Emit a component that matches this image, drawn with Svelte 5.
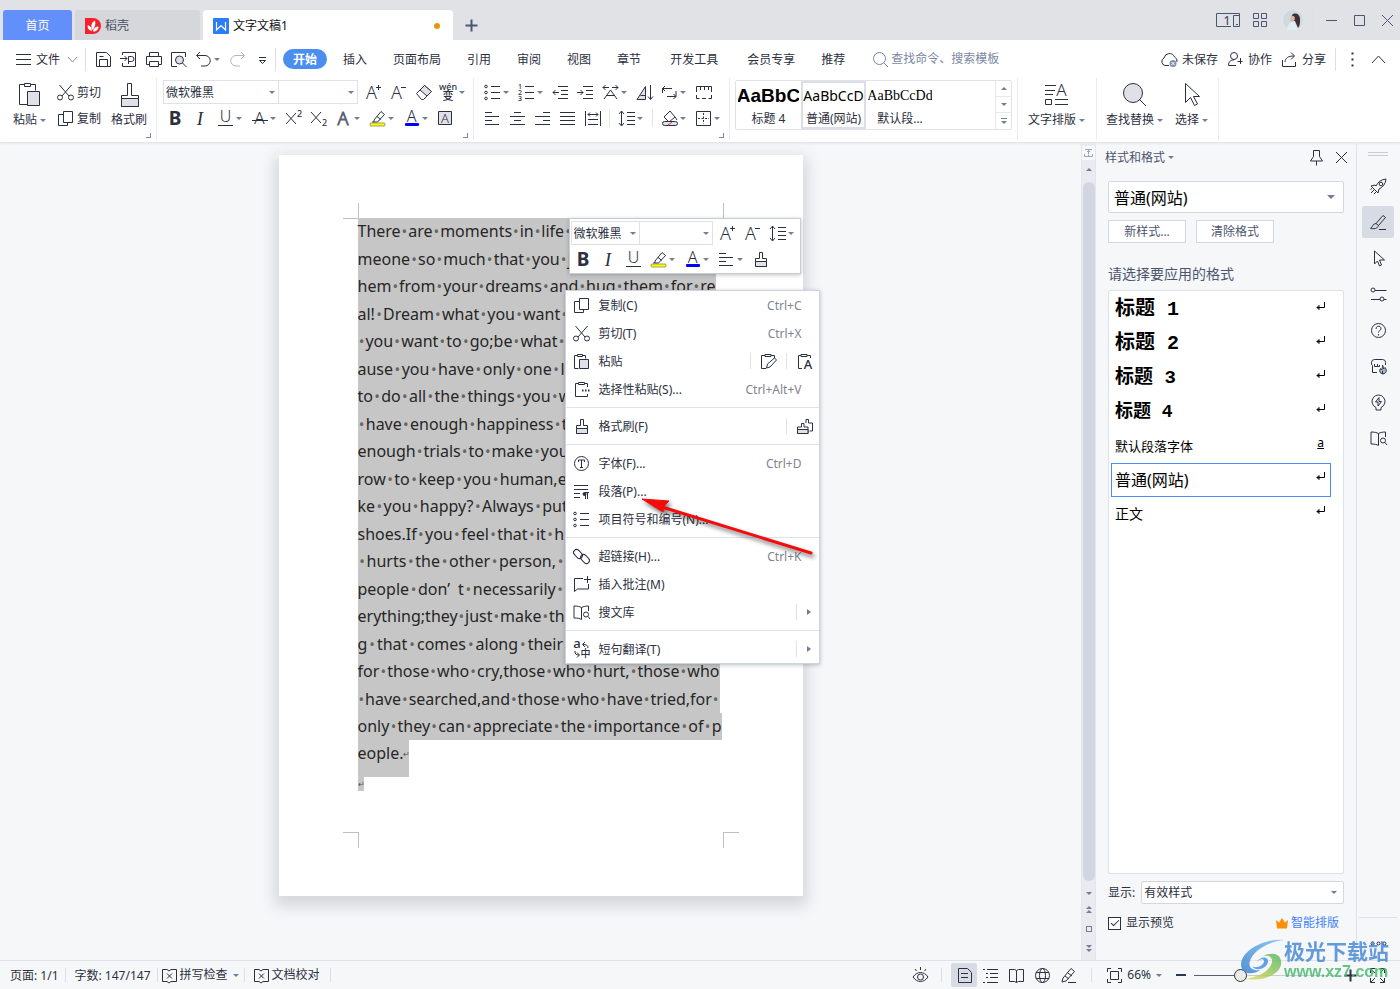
<script lang="ts">
  type Tool = { icon: string; title: string; caret?: boolean; sepBefore?: boolean }
  type MenuItem = { icon: string; text: string; keys?: string; extras?: string[]; sub?: boolean }

  const letter = (x: number, y: number, size: number, ch: string, attrs = '') =>
    `<text x="${x}" y="${y}" font-size="${size}" ${attrs}>${ch}</text>`

  const soft = 'fill="#dfe1e6"'
  const clip = '<path d="M6.5 4.5h-3v13h4M11.500 4.500h3v3M6.500 3.500h5v2h-5z"/>'
  const brush = `<path d="M9.500 9.500v-6h3v6h4v8h-11v-8z"/><path d="M5.500 12.500h11v5h-11z" ${soft}/>`
  const cursor = '<path d="M6.500 3v13l3-3 2 5 2-1-2-5h5z"/>'

  // all small glyphs are drawn on a 21px grid
  const icons: Record<string, string> = {
    burger: '<path d="M3 5.500h15M3 10.500h15M3 15.500h15"/>',
    down: '<path d="M6 8l4.500 5L15 8" stroke="#8b909c"/>',
    up: '<path d="M4 14l6.500-7 6.500 7"/>',
    save: '<path d="M3.500 3.500h10l4 4v10h-14zM6.500 17v-6.500h8V17M6.500 7.500h4"/>',
    pdf: '<path d="M4.500 6V3.500h13v14h-13V14M2 9.500h7M6.500 7l2.500 2.500L6.500 12M10.500 15V7.500h3a2 2 0 0 1 0 5h-3"/>',
    print: '<path d="M6.500 7V3.500h9V7M6 15.500H3.500v-8h15v8H16M6.500 12.500h9v5h-9z"/>',
    preview: `<path d="M17.500 8V3.500h-14v14H9"/><circle cx="11.500" cy="11" r="4" ${soft}/><path d="M14.500 14l4 4"/>`,
    undo: '<path d="M7 3L3.500 6.500 7 10M4 6.500h8a5 5 0 0 1 0 10.500H8"/>',
    redo: '<path d="M14 3l3.500 3.500L14 10M17 6.500H9A5 5 0 0 0 9 17h4" stroke="#b3b6bd"/>',
    more: '<path d="M7 8.500h7M7.500 11.500l3 3 3-3z"/>',
    search: '<circle cx="9.500" cy="9.500" r="6"/><path d="M14 14l4 4"/>',
    cloud: '<path d="M10 16.500H6a4 4 0 0 1-1-7.500 5.500 5.500 0 0 1 10.500-1A4.500 4.500 0 0 1 18 13"/><circle cx="14" cy="14.500" r="3.500" fill="#8190ae" stroke="none"/><path d="M12.500 13l3 3M15.500 13l-3 3" stroke="#fff"/>',
    person: '<circle cx="9" cy="7" r="3.500"/><path d="M11 16.500H3.500c0-4 2-5.500 5.500-5.500M15.500 9v6M12.500 12.500h5"/>',
    share: '<path d="M3.500 11v6.500h13V13M6 13c.5-4 3-6 9-6M12 3.500L15.500 7 12 10.500"/>',
    dots: '<path d="M9.500 4.500h2M9.500 10.500h2M9.500 16.500h2" stroke-width="2"/>',
    cut: '<path d="M4.500 3l9.500 11M16.500 3L7 14"/><circle cx="5" cy="15.500" r="2.500"/><circle cx="16" cy="15.500" r="2.500"/>',
    copy: '<path d="M8.500 3.500h9v11h-9zM8.500 6.500h-5v11h9v-3"/>',
    bold: letter(10, 17, 19, 'B', 'font-weight="700"'),
    italic: letter(10, 17, 19, 'I', 'font-style="italic" font-family="Liberation Serif"'),
    underline: letter(10.5, 14, 16, 'U') + '<path d="M3 17.500h15"/>',
    strike: letter(10.5, 16, 17, 'A') + '<path d="M3 12.500h16"/>',
    sup: '<path d="M3 5l10 11M13 5L3 16"/>' + letter(16.5, 9, 9, '2', 'class="tiny"'),
    sub: '<path d="M3 4l10 11M13 4L3 15"/>' + letter(16.5, 18, 9, '2', 'class="tiny"'),
    outlineA: letter(10, 17, 18, 'A', 'style="fill:#fff;stroke:#5d6474"'),
    highlight: '<path d="M7 12l7-8.500 3.500 3-7 7.500H7zM10 8.500l4 3M7 14H5"/><rect x="3" y="15" width="15" height="3" rx="1" fill="#ff0" stroke="#77794d" stroke-width=".7"/>',
    fontColor: letter(10.5, 14, 16, 'A') + '<rect x="4" y="15" width="14" height="3" rx="1" fill="#00f" stroke="none"/>',
    boxA: `<path d="M3.500 3.500h13v13h-13z" ${soft}/>` + letter(10, 15, 13, 'A'),
    grow: letter(8.5, 17, 18, 'A') + '<path d="M13 5.500h5M15.500 3v5"/>',
    shrink: letter(8.5, 17, 18, 'A') + '<path d="M13 5.500h5"/>',
    eraser: `<path d="M3.500 11.500l8-8 7 6-8 8h-2z"/><path d="M7 8l7 6 4.500-4.500-7-6z" ${soft}/>`,
    pinyin: letter(10, 8, 9, 'wén', 'class="tiny"') + letter(10, 18, 11, '变', 'class="tiny"'),
    bullets: '<circle cx="4" cy="4.500" r="1.300"/><circle cx="4" cy="10.500" r="1.300"/><circle cx="4" cy="16.500" r="1.300"/><path d="M9 4.500h9M9 10.500h9M9 16.500h9"/>',
    numbers: letter(4, 7, 7, '1', 'class="tiny"') + letter(4, 13, 7, '2', 'class="tiny"') + letter(4, 19, 7, '3', 'class="tiny"') + '<path d="M9 4.500h9M9 10.500h9M9 16.500h9"/>',
    outdent: '<path d="M8 4.500h10M11 8.500h7M11 12.500h7M8 16.500h10M3 10.500h6M5.500 8L3 10.500 5.500 13"/>',
    indent: '<path d="M8 4.500h10M11 8.500h7M11 12.500h7M8 16.500h10M2 10.500h6M5.500 8L8 10.500 5.500 13"/>',
    scaleA: '<path d="M4 17l6.500-9 6.500 9M7 13.500h7M3 5.500h6M5.500 3L3 5.500 5.500 8M12 5.500h6M15.500 3L18 5.500 15.500 8"/>',
    sort: `<path d="M3 17.500L11.500 4.500v13zM6.500 13.500h5" ${soft}/><path d="M16.500 3v14M14 14.500l2.500 3 2.500-3"/>`,
    wrap: '<path d="M13 6.500H3.500M6 4L3.500 6.500 6 9M3.500 6.500V11M8 14.500h9M14.500 12l2.500 2.500-2.500 2.500M17 9v5"/>',
    ruler: '<path d="M3.500 10V4.500h15V10M7.500 5v3M11.500 5v3M15.500 5v3M3.500 13v3.500h3M9 16.500h4M18.500 13v3.500h-3"/>',
    left: '<path d="M3 4.500h7M3 8.500h14M3 12.500h7M3 16.500h14"/>',
    center: '<path d="M7 4.500h7M3 8.500h15M7 12.500h7M3 16.500h15"/>',
    right: '<path d="M11 4.500h7M3 8.500h15M11 12.500h7M3 16.500h15"/>',
    justify: '<path d="M3 4.500h15M3 8.500h15M3 12.500h15M3 16.500h15"/>',
    spread: '<path d="M3.500 3v15M18.500 3v15M6 11.500h10M6 16.500h10M6 6.500h10M8 4.500l-2 2 2 2M14 4.500l2 2-2 2"/>',
    spacing: '<path d="M5.500 3.500v14M3 6l2.500-3L8 6M3 15l2.500 3L8 15M11 4.500h8M11 8.500h8M11 12.500h8M11 16.500h8"/>',
    fill: `<path d="M5 9l6-6 5 6-6 5zM16 9l2 3"/><rect x="3.500" y="13.500" width="15" height="4" rx="2" ${soft}/><path d="M9 17l4-3" stroke="#e34"/>`,
    border: '<path d="M3.500 3.500h14v14h-14z"/><path d="M10.500 5v11M5 10.500h11" stroke-dasharray="2 1.500"/>',
    brush,
    paste: `${clip}<path d="M8.500 8.500h9v9h-9z" ${soft}/>`,
    special: '<path d="M7 4.500H4.500v13h12V15M14 4.500h2.500V8M7.500 3.500h6v2h-6z"/><path d="M11 11.500h1.500M14 11.500h1.500M17 11.500h1.500" stroke-width="2"/>',
    pasteFmt: '<path d="M7 4.500H3.500v13H8M13 4.500h3.500V7M7 3.500h6v2H7zM8.500 17l1-4 7-6 2 2-6.500 7z"/>',
    pasteText: '<path d="M7 4.500H4.500v13H8M13 4.500h3.500V7M7 3.500h6v2H7z"/>' + letter(14, 18, 13, 'A', 'class="tiny"'),
    brushes: `<path d="M12 7V3.500h2.500V7h4v8h-3"/><path d="M7.500 11V7.500H10V11h4v6.500H3.500V11z" fill="#fff"/><path d="M3.500 13.500H14v4H3.500z" ${soft}/>`,
    font: '<circle cx="10.500" cy="10.500" r="7"/><path d="M7.500 9V7h6v2M10.500 7v7.500M9 14.500h3"/>',
    para: '<path d="M3 4.500h14M3 8.500h14M3 12.500h6M3 16.500h6"/><path d="M18 11.500h-4M14.500 11.500v6.500M16.500 11.500v6.500"/><circle cx="13.500" cy="13" r="1.500" fill="currentColor"/>',
    link: '<rect x="2" y="5" width="10" height="6" rx="3" transform="rotate(45 7 8)"/><rect x="9" y="10" width="10" height="6" rx="3" transform="rotate(45 14 13)"/>',
    comment: '<path d="M12 4.500H3.500v13l3-2.500h11v-5M16.500 2v7M13 5.500h7"/>',
    library: '<path d="M10.500 5.500c-2-1-4-1.500-7.500-1.500v12c4 0 6 .5 7.500 1.500zM10.500 5.500c2-1 4-1.500 7-1.500v5"/><circle cx="15" cy="12.500" r="2.500"/><path d="M17 14.500l2 2.500"/>',
    translate: letter(6, 9, 13, 'a', 'class="tiny"') + letter(14.5, 18, 10, '中', 'class="tiny"') + '<path d="M17 9c0-3-2-3.500-5-3.500M14 3l-2.500 2.500L14 8M4 12c0 3 1 4 4 4M6 13.500L8.500 16 6 18.500"/>',
    pin: '<path d="M7.500 3.500h6v6l3 4.500h-12l3-4.500zM10.500 14v4.500"/>',
    close: '<path d="M5 5l11 11M16 5L5 16"/>',
    rocket: '<path d="M8 10c2-4 5-6.500 10-7-.5 5-3 8-7 10l-1 4-2-2-3-3-2-2 4-1z"/><circle cx="13" cy="8" r="1.800"/><path d="M6 14l-3 3M8 16l-2 2M4 12.500l-1.500 1"/>',
    pen: '<path d="M8 11.500l7-8 2.500 2-7 8zM8 11.500c-3 0-3 3-5.500 5 3 .5 7 .5 8-3M11 17.500h7"/>',
    cursor,
    sliders: '<circle cx="5" cy="6" r="2"/><path d="M7 6.500h11.500M3 15.500h9M16 15.500h2.500"/><circle cx="14" cy="15" r="2"/>',
    help: '<circle cx="10.500" cy="10.500" r="7"/><path d="M8 9c0-4 5.500-3.500 5 0-.3 1.500-2.500 1.500-2.500 3.500M10.500 14v1.500"/>',
    shop: '<path d="M17.500 9V6.500a3 3 0 0 0-3-3h-8a3 3 0 0 0-3 3v1.500a2 2 0 0 0 1 1.500v7h4.500M6.500 8v2.500h3V8M9.500 10.500h2V9"/><path d="M14.500 9c1 2 1 3 1 4l1.500-1.500c2.500 3 1 6-2 6.500-3.500-.5-4-3.500-2.500-5.500l1 1.500c1-1.500 1-3 1-5zM14.500 18v-3" fill="#aeb5c2"/>',
    bulb: '<path d="M8 15.500a6.500 6.500 0 1 1 5 0v2.500H8zM11 5.500L7.500 10H10v4l3.500-4.500H11z"/>',
    eye: '<path d="M3 12c4-6 11-6 15 0-4 6-11 6-15 0zM10.500 2v3M5 4l1.500 2M16 4l-1.500 2"/><circle cx="10.500" cy="12" r="3"/>',
    pageView: '<path d="M4.500 3.500h9l4 4v10h-13zM7 8.500h7M7 12.500h7"/>',
    outline: '<path d="M3 4.500h2M7 4.500h11M6 8.500h2M10 8.500h8M6 12.500h2M10 12.500h8M3 17.500h2M7 17.500h11"/>',
    book: '<path d="M3.500 4.500h5l2 1 2-1h5v12h-5l-2 1-2-1h-5zM10.500 5.500v12"/>',
    globe: '<circle cx="10.500" cy="10.500" r="7"/><ellipse cx="10.500" cy="10.500" rx="3" ry="7"/><path d="M4 7.500h13M4 13.500h13"/>',
    write: '<path d="M5 13l8-9.500 3.500 3-8.500 9.500-4 1zM7 11l4 3M10 8l4 3M10 17.500h8"/>',
    fit: '<path d="M6.500 6.500h8v8h-8zM3.500 7V3.500H7M14 3.500h3.500V7M17.500 14v3.500H14M7 17.500H3.500V14"/>',
    full: '<path d="M3.500 8V3.500H8M13 3.500h4.500V8M17.500 13v4.500H13M8 17.500H3.500V13M4 4l4 4M17 4l-4 4M17 17l-4-4M4 17l4-4"/>',
    spell: '<path d="M8 4.500H3.500v12H8l2 1.500 2-1.500h5.500v-12H12L10 6zM8 8.500l5 5M13 8.500l-5 5"/>',
    minus: '<path d="M5 10.500h11"/>',
    square: '<path d="M5.500 5.500h10v10h-10z"/>',
    plus: '<path d="M10.500 4.500v12M4.500 10.500h12" stroke-width="2"/>',
    grid: '<path d="M4.500 3.500h5v5h-5zM12.500 3.500h5v5h-5zM4.500 11.500h5v5h-5zM12.500 11.500h5v5h-5z"/>',
    enter: '<path d="M15.500 6v5.500H8M10 9.500l-2 2 2 2z"/>',
  }

  // ribbon glyphs, 27px grid
  const bigIcons: Record<string, string> = {
    paste: `<path d="M8.500 3.500h-5v20h8M14.500 3.500h5v6M8.500 2.500h6v3h-6z"/><path d="M11.500 10.500h12v14h-12z" ${soft}/>`,
    brush: `<path d="M11.500 14.500v-12h4v12h7v11h-17v-11z"/><path d="M5.500 17.500h17v8h-17z" ${soft}/>`,
    layout: '<path d="M2 4.500h11M2 9.500h10M2 13.500h8M2.500 18.500h6v5h-6zM12 18.500h13M12 23.500h13"/>' + letter(18.500, 15, 17, 'A'),
    find: `<circle cx="12" cy="12" r="9.500" ${soft}/><path d="M18 18l7 7"/>`,
    select: '<path d="M7.500 2.500v19l5-5 4 8 3-1.500-4-7.500h6z"/>',
  }

  const quick: Tool[] = [
    { icon: 'save', title: '保存' },
    { icon: 'pdf', title: '输出为PDF' },
    { icon: 'print', title: '打印' },
    { icon: 'preview', title: '打印预览' },
    { icon: 'undo', title: '撤销', caret: true },
    { icon: 'redo', title: '恢复' },
    { icon: 'more', title: '自定义' },
  ]
  const tabs = ['开始', '插入', '页面布局', '引用', '审阅', '视图', '章节', '开发工具', '会员专享', '推荐']
  const extraTabs = ['开发工具', '会员专享']

  const fontTop: Tool[] = [
    { icon: 'grow', title: '增大字号' },
    { icon: 'shrink', title: '减小字号' },
    { icon: 'eraser', title: '清除格式' },
    { icon: 'pinyin', title: '拼音指南', caret: true },
  ]
  const fontBottom: Tool[] = [
    { icon: 'bold', title: '加粗' },
    { icon: 'italic', title: '倾斜' },
    { icon: 'underline', title: '下划线', caret: true },
    { icon: 'strike', title: '删除线', caret: true },
    { icon: 'sup', title: '上标' },
    { icon: 'sub', title: '下标' },
    { icon: 'outlineA', title: '文字效果', caret: true },
    { icon: 'highlight', title: '突出显示', caret: true },
    { icon: 'fontColor', title: '字体颜色', caret: true },
    { icon: 'boxA', title: '字符底纹' },
  ]
  const paraTop: Tool[] = [
    { icon: 'bullets', title: '项目符号', caret: true },
    { icon: 'numbers', title: '编号', caret: true },
    { icon: 'outdent', title: '减少缩进量' },
    { icon: 'indent', title: '增加缩进量' },
    { icon: 'scaleA', title: '中文版式', caret: true },
    { icon: 'sort', title: '排序' },
    { icon: 'wrap', title: '显示段落标记', caret: true },
    { icon: 'ruler', title: '制表位' },
  ]
  const paraBottom: Tool[] = [
    { icon: 'left', title: '左对齐' },
    { icon: 'center', title: '居中对齐' },
    { icon: 'right', title: '右对齐' },
    { icon: 'justify', title: '两端对齐' },
    { icon: 'spread', title: '分散对齐' },
    { icon: 'spacing', title: '行距', caret: true, sepBefore: true },
    { icon: 'fill', title: '底纹颜色', caret: true, sepBefore: true },
    { icon: 'border', title: '边框', caret: true },
  ]
  const miniTop: Tool[] = [
    { icon: 'grow', title: '增大字号' },
    { icon: 'shrink', title: '减小字号' },
    { icon: 'spacing', title: '行距', caret: true },
  ]
  const miniBottom: Tool[] = [
    { icon: 'bold', title: '加粗' },
    { icon: 'italic', title: '倾斜' },
    { icon: 'underline', title: '下划线' },
    { icon: 'highlight', title: '突出显示', caret: true },
    { icon: 'fontColor', title: '字体颜色', caret: true },
    { icon: 'left', title: '对齐', caret: true },
    { icon: 'brush', title: '格式刷' },
  ]

  // width is how far the selection reaches on that line
  const lines: { text: string; width: number }[] = [
    { text: 'There are moments in life when you miss so', width: 358 },
    { text: 'meone so much that you just want to pick t', width: 358 },
    { text: 'hem from your dreams and hug them for re', width: 358 },
    { text: 'al! Dream what you want to dream;go where', width: 362 },
    { text: ' you want to go;be what you want to be,bec', width: 362 },
    { text: 'ause you have only one life and one chance', width: 362 },
    { text: 'to do all the things you want to do.May you', width: 362 },
    { text: ' have enough happiness to make you sweet,', width: 362 },
    { text: 'enough trials to make you strong,enough sor', width: 362 },
    { text: 'row to keep you human,enough hope to ma', width: 362 },
    { text: 'ke you happy? Always put yourself in others’', width: 362 },
    { text: 'shoes.If you feel that it hurts you,it probably', width: 362 },
    { text: ' hurts the other person, too.The happiest of', width: 362 },
    { text: 'people don’\u2002t necessarily have the best of ev', width: 368 },
    { text: 'erything;they just make the most of everythin', width: 362 },
    { text: 'g that comes along their way.Happiness lies', width: 362 },
    { text: 'for those who cry,those who hurt, those who', width: 362 },
    { text: ' have searched,and those who have tried,for ', width: 362 },
    { text: 'only they can appreciate the importance of p', width: 364 },
  ]

  const menu: MenuItem[][] = [
    [
      { icon: 'copy', text: '复制(C)', keys: 'Ctrl+C' },
      { icon: 'cut', text: '剪切(T)', keys: 'Ctrl+X' },
      { icon: 'paste', text: '粘贴', extras: ['pasteFmt', 'pasteText'] },
      { icon: 'special', text: '选择性粘贴(S)...', keys: 'Ctrl+Alt+V' },
    ],
    [{ icon: 'brush', text: '格式刷(F)', extras: ['brushes'] }],
    [
      { icon: 'font', text: '字体(F)...', keys: 'Ctrl+D' },
      { icon: 'para', text: '段落(P)...' },
      { icon: 'bullets', text: '项目符号和编号(N)...' },
    ],
    [
      { icon: 'link', text: '超链接(H)...', keys: 'Ctrl+K' },
      { icon: 'comment', text: '插入批注(M)' },
      { icon: 'library', text: '搜文库', sub: true },
    ],
    [{ icon: 'translate', text: '短句翻译(T)', sub: true }],
  ]

  const styles = [
    { name: '标题 1', cls: 'h1' },
    { name: '标题 2', cls: 'h2' },
    { name: '标题 3', cls: 'h3' },
    { name: '标题 4', cls: 'h4' },
    { name: '默认段落字体', cls: 'char' },
    { name: '普通(网站)', cls: 'web' },
    { name: '正文', cls: 'body' },
  ]
  const side = ['rocket', 'pen', 'cursor', 'sliders', 'help', 'shop', 'bulb', 'library']
  const views = ['pageView', 'outline', 'book', 'globe', 'write']

  let activeTab = $state('开始')
  let activeStyle = $state('普通(网站)')
  let activeSide = $state('pen')
  let activeView = $state('pageView')
  let showPreview = $state(true)
  let zoom = $state(66)
</script>

{#snippet icon(name: string)}
  <svg class="icon" width="21" height="21" viewBox="0 0 21 21" aria-hidden="true">{@html icons[name]}</svg>
{/snippet}

{#snippet bigIcon(name: string)}
  <svg class="icon" width="27" height="27" viewBox="0 0 27 27" aria-hidden="true">{@html bigIcons[name]}</svg>
{/snippet}

{#snippet tools(list: Tool[])}
  {#each list as t}
    {#if t.sepBefore}<span class="tool-sep"></span>{/if}
    <button class="tool" class:wide={t.caret} title={t.title}>
      {@render icon(t.icon)}
      {#if t.caret}<i class="caret"></i>{/if}
    </button>
  {/each}
{/snippet}

{#snippet fontBoxes()}
  <div class="fonts">
    <label class="pick name">
      <select aria-label="字体"><option>微软雅黑</option></select>
      <i class="caret"></i>
    </label>
    <label class="pick size">
      <select aria-label="字号"><option></option></select>
      <i class="caret"></i>
    </label>
  </div>
{/snippet}

<div class="app">
  <header class="titlebar">
    <button class="tab home">首页</button>
    <button class="tab docer">
      <svg width="16" height="16" viewBox="0 0 16 16">
        <path d="M0 0h8a8 8 0 0 1 0 16H0z" fill="#f5222d" />
        <path d="M7 13C3 12 2 9 3 7c2 1 4 3 4 6zM7.500 12C5 8 7 4 10 2.500c1 3 0 7-2.500 9.500zM8 13.500c.5-3.500 3-5 5.500-5 0 3-2 5-5.500 5z" fill="#fff" />
      </svg>
      稻壳
    </button>
    <button class="tab doc">
      <svg width="16" height="16" viewBox="0 0 16 16">
        <rect width="16" height="16" rx="1" fill="#2a7cf7" />
        <path d="M3.500 4v8l4.500-4.500 4.500 4.500V4" fill="none" stroke="#fff" stroke-width="1.200" />
      </svg>
      文字文稿1
      <span class="unsaved"></span>
    </button>
    <button class="add" title="新建">{@render icon('plus')}</button>
    <div class="window">
      <button class="badge" title="窗口">
        <svg class="icon" width="25" height="15" viewBox="0 0 25 15"><path d="M15 13.500H.5V.5h23v13h-6v-11h6M20 11.500h2" /><text x="11" y="12" font-size="12" class="tiny">1</text></svg>
      </button>
      <button title="应用">{@render icon('grid')}</button>
      <svg class="avatar" width="20" height="20" viewBox="0 0 20 20">
        <circle cx="10" cy="10" r="10" fill="#cddbe1" />
        <path d="M4 19c1-5 4-8 7-8l4 8a10 10 0 0 1-11 0z" fill="#e3eef2" />
        <path d="M9 5c3-3 8-1 8 4 0 4 0 7-2 9l-3-7-4-1z" fill="#3a3035" />
        <path d="M8 6c2-1 4 0 4 3l-2 3-3-1z" fill="#dfb4a8" />
      </svg>
      <span class="vsep"></span>
      <button title="最小化">{@render icon('minus')}</button>
      <button title="最大化">{@render icon('square')}</button>
      <button title="关闭">{@render icon('close')}</button>
    </div>
  </header>

  <nav class="menubar">
    <button class="file">{@render icon('burger')}<span>文件</span>{@render icon('down')}</button>
    <span class="vsep"></span>
    <div class="quick">{@render tools(quick)}</div>
    <span class="vsep"></span>
    <div class="tabs">
      {#each tabs as t}
        <button class="rtab" class:extra-tab={extraTabs.includes(t)} class:on={activeTab === t} onclick={() => { activeTab = t }}><span>{t}</span></button>
      {/each}
    </div>
    <label class="search">
      {@render icon('search')}
      <input type="text" placeholder="查找命令、搜索模板" />
    </label>
    <div class="account">
      <button>{@render icon('cloud')}<span>未保存</span></button>
      <button>{@render icon('person')}<span>协作</span></button>
      <button>{@render icon('share')}<span>分享</span></button>
      <span class="vsep"></span>
      <button title="更多">{@render icon('dots')}</button>
      <button class="fold" title="折叠">{@render icon('up')}</button>
    </div>
  </nav>

  <section class="ribbon">
    <div class="group clipboard">
      <button class="big">{@render bigIcon('paste')}<span>粘贴<i class="caret"></i></span></button>
      <div class="stack">
        <button class="small">{@render icon('cut')}<span>剪切</span></button>
        <button class="small">{@render icon('copy')}<span>复制</span></button>
      </div>
      <button class="big">{@render bigIcon('brush')}<span>格式刷</span></button>
      <i class="launcher"></i>
    </div>
    <div class="group font">
      <div class="row">{@render fontBoxes()}{@render tools(fontTop)}</div>
      <div class="row">{@render tools(fontBottom)}</div>
      <i class="launcher"></i>
    </div>
    <div class="group para">
      <div class="row">{@render tools(paraTop)}</div>
      <div class="row">{@render tools(paraBottom)}</div>
      <i class="launcher"></i>
    </div>
    <div class="group gallery-group">
      <div class="gallery">
        <button class="card"><span class="sample arial">AaBbC</span><span>标题 4</span></button>
        <button class="card on"><span class="sample">AaBbCcD</span><span>普通(网站)</span></button>
        <button class="card last-card"><span class="sample serif">AaBbCcDd</span><span>默认段...</span></button>
        <div class="gallery-nav">
          <button title="上一行"><i class="caret flip"></i></button>
          <button title="下一行"><i class="caret"></i></button>
          <button title="更多样式"><i class="bar"></i><i class="caret"></i></button>
        </div>
      </div>
    </div>
    <div class="group layout">
      <button class="big">{@render bigIcon('layout')}<span>文字排版<i class="caret"></i></span></button>
    </div>
    <div class="group find">
      <button class="big">{@render bigIcon('find')}<span>查找替换<i class="caret"></i></span></button>
      <button class="big">{@render bigIcon('select')}<span>选择<i class="caret"></i></span></button>
    </div>
  </section>

  <main class="work">
    <div class="canvas">
      <article class="page">
        <div class="marks top"><i></i><i></i></div>
        <div class="text">
          {#each lines as line}
            <p class="line" style="width: {line.width}px">
              {#each line.text.split(' ') as word, i}
                {#if i > 0}<span class="dot">•</span>{/if}{#if word}<span>{word}</span>{/if}
              {/each}
            </p>
          {/each}
          <p class="line last"><span>eople.</span><span class="mark">↵</span></p>
          <p class="line blank"><span class="mark">↵</span></p>
        </div>
        <div class="marks bottom"><i></i><i></i></div>

        <div class="mini">
          <div class="row">{@render fontBoxes()}{@render tools(miniTop)}</div>
          <div class="row">{@render tools(miniBottom)}</div>
        </div>

        <div class="context" role="menu">
          {#each menu as group, g}
            {#if g > 0}<div class="menu-sep"></div>{/if}
            {#each group as item}
              <div class="item">
                <button class="main" role="menuitem">
                  {@render icon(item.icon)}<span>{item.text}</span>
                  {#if item.keys}<kbd>{item.keys}</kbd>{/if}
                </button>
                {#each item.extras ?? [] as extra}
                  <span class="cell-sep"></span>
                  <button title={item.text}>{@render icon(extra)}</button>
                {/each}
                {#if item.sub}
                  <span class="cell-sep"></span>
                  <i class="sub"></i>
                {/if}
              </div>
            {/each}
          {/each}
          <svg class="pointer" width="184" height="72" viewBox="0 0 184 72" aria-hidden="true">
            <path d="M24 12L173 58" stroke="#f40b0b" stroke-width="3" stroke-linecap="round" />
            <path d="M4 4l27 2-5 5-1 6z" fill="#f40b0b" stroke="#f40b0b" />
          </svg>
        </div>
      </article>
    </div>

    <div class="scroll">
      <svg class="split" width="13" height="14" viewBox="0 0 13 14"><path d="M3 3.500h7M5 5.500h3M6.500 4v4M2.500 8v2.500h8V8M6.500 8.500v2" fill="none" stroke="#98a2bd" /></svg>
      <i class="caret flip"></i>
      <div class="thumb"></div>
      <i class="caret"></i>
      <span class="pair"><i class="caret flip"></i><i class="caret flip"></i></span>
      <i class="ring"></i>
      <span class="pair"><i class="caret"></i><i class="caret"></i></span>
    </div>

    <aside class="panel">
      <div class="panel-head">
        <button><span>样式和格式</span><i class="caret"></i></button>
        <button class="tool pin" title="固定">{@render icon('pin')}</button>
        <button class="tool" title="关闭">{@render icon('close')}</button>
      </div>
      <label class="pick current">
        <select aria-label="当前样式"><option>普通(网站)</option></select>
        <i class="caret"></i>
      </label>
      <div class="actions">
        <button>新样式...</button>
        <button>清除格式</button>
      </div>
      <h2>请选择要应用的格式</h2>
      <div class="list">
        {#each styles as s}
          <button class="style {s.cls}" class:on={activeStyle === s.name} onclick={() => { activeStyle = s.name }}>
            <span>{s.name}</span>
            {#if s.cls === 'char'}<u>a</u>{:else}{@render icon('enter')}{/if}
          </button>
        {/each}
      </div>
      <div class="filter">
        <label for="show">显示:</label>
        <div class="pick">
          <select id="show"><option>有效样式</option></select>
          <i class="caret"></i>
        </div>
      </div>
      <div class="foot">
        <label><input type="checkbox" bind:checked={showPreview} />显示预览</label>
        <a href="#smart">
          <svg width="12" height="11" viewBox="0 0 12 11"><path d="M0 2l3 2.500L6 0l3 4.500L12 2l-1 8.500H1z" fill="#f9900a" /></svg>
          智能排版
        </a>
      </div>
    </aside>

    <aside class="side">
      <i class="grip"></i>
      {#each side as s}
        <button class:on={activeSide === s} title={s} onclick={() => { activeSide = s }}>{@render icon(s)}</button>
      {/each}
      <div class="side-end"><svg class="icon" width="17" height="5" viewBox="0 0 17 5"><circle cx="2.500" cy="2.500" r="1.500" /><circle cx="8.500" cy="2.500" r="1.500" /><circle cx="14.500" cy="2.500" r="1.500" /></svg></div>
    </aside>
  </main>

  <footer class="status">
    <span class="cell">页面: 1/1</span>
    <span class="vsep"></span>
    <span class="cell">字数: 147/147</span>
    <span class="vsep"></span>
    <button class="proof">{@render icon('spell')}拼写检查<i class="caret"></i></button>
    <span class="vsep"></span>
    <button class="proof last-proof">{@render icon('spell')}文档校对</button>
    <span class="vsep"></span>
    <div class="view">
      <button title="护眼模式">{@render icon('eye')}</button>
      <span class="vsep"></span>
      {#each views as v}
        <button class="mode" class:on={activeView === v} title={v} onclick={() => { activeView = v }}>{@render icon(v)}</button>
      {/each}
      <span class="vsep"></span>
      <button class="mode" title="最佳显示比例">{@render icon('fit')}</button>
      <button class="zoom">{zoom}%<i class="caret"></i></button>
      <button class="step" title="缩小" onclick={() => { zoom = Math.max(10, zoom - 10) }}><i class="less"></i></button>
      <input type="range" min="10" max="190" bind:value={zoom} aria-label="显示比例" />
      <button class="step" title="放大" onclick={() => { zoom = Math.min(190, zoom + 10) }}>{@render icon('plus')}</button>
      <button class="mode" title="全屏显示">{@render icon('full')}</button>
    </div>
  </footer>

  <div class="brand">
    <svg width="44" height="42" viewBox="0 0 44 42" aria-hidden="true">
      <defs>
        <linearGradient id="sky" x1="1" y1="0" x2="0" y2="1"><stop offset="0" stop-color="#7ec3f5" /><stop offset="1" stop-color="#3a80cf" /></linearGradient>
        <linearGradient id="leaf" x1="0" y1="1" x2="1" y2="0"><stop offset="0" stop-color="#e6dc5a" /><stop offset="1" stop-color="#56b866" /></linearGradient>
      </defs>
      <path d="M44 1C20-1-4 16 2 30c2 5 12 6 18 1-8 1-12-3-10-9C13 12 27 3 44 1z" fill="url(#sky)" />
      <path d="M5 40c20 3 38-6 36-18-1-8-10-9-18-5 8-1 11 3 8 9-4 8-14 12-26 14z" fill="url(#leaf)" />
      <path d="M12 27c3 3 12 0 12-5 0-3-5-2-7 1 3-6 12-6 11 0-1 7-13 10-16 4z" fill="#4a97dc" />
    </svg>
    <div class="words">
      <strong>极光下载站</strong>
      <span>www.xz7.com</span>
    </div>
  </div>
</div>

<style>
  :global(body) {
    margin: 0;
  }

  .app {
    position: relative;
    display: flex;
    flex-direction: column;
    min-height: 100vh;
    overflow: hidden;
    background: #f5f7f9;
    color: #2b3040;
    font-family: 'Noto Sans', 'Noto Sans CJK SC', sans-serif;
    font-size: 12px;
    line-height: 18px;
  }

  button,
  select,
  input {
    margin: 0;
    padding: 0;
    border: none;
    background: none;
    color: inherit;
    font: inherit;
    outline: none;
  }

  button {
    display: flex;
    align-items: center;
    justify-content: center;
    flex: none;
    white-space: nowrap;
  }

  select {
    appearance: none;
    flex: 1;
    min-width: 0;
    padding-top: 1px;
  }

  .icon {
    flex: none;
    fill: none;
    stroke: currentColor;
    overflow: visible;
  }

  .icon :global(text) {
    fill: currentColor;
    stroke: none;
    text-anchor: middle;
    font-weight: 300;
  }

  .icon :global(text.tiny) {
    font-weight: 500;
  }

  .icon :global(text[font-weight]) {
    font-weight: 700;
  }

  .caret {
    flex: none;
    width: 0;
    border: 3px solid transparent;
    border-top-color: #727d96;
    border-bottom-width: 0;
  }

  .flip {
    transform: rotate(180deg);
  }

  .vsep {
    flex: none;
    width: 1px;
    height: 22px;
    background: #dcdee3;
  }

  /* title bar */
  .titlebar {
    display: flex;
    align-items: flex-end;
    gap: 3px;
    height: 40px;
    padding-left: 3px;
    background: #e1e2e6;
  }

  .tab {
    height: 30px;
    padding-top: 1px;
    border-radius: 3px 3px 0 0;
    gap: 4px;
  }

  .home {
    width: 69px;
    background: #638ffb;
    color: #fff;
  }

  .docer {
    width: 125px;
    padding-left: 10px;
    justify-content: flex-start;
    background: #d6d7da;
    color: #4a5060;
  }

  .doc {
    width: 250px;
    padding: 1px 13px 0 10px;
    justify-content: flex-start;
    background: #fff;
    color: #111;
  }

  .unsaved {
    width: 6px;
    height: 6px;
    margin-left: auto;
    border-radius: 50%;
    background: #e6960f;
  }

  .add {
    width: 30px;
    height: 30px;
    color: #4a5672;
  }

  .window {
    display: flex;
    align-items: center;
    gap: 7px;
    height: 40px;
    margin-left: auto;
    padding-right: 2px;
    color: #4a5672;
  }

  .window .badge {
    margin-right: 1px;
  }

  .avatar {
    margin: 0 3px 0 6px;
  }

  /* menu row */
  .menubar {
    display: flex;
    align-items: center;
    height: 38px;
    padding: 0 11px 0 13px;
    background: #fff;
  }

  .menubar span {
    padding-top: 1px;
  }

  .file {
    gap: 2px;
    margin-right: 2px;
  }

  .quick {
    display: flex;
    margin: 0 0 0 5px;
  }

  .tabs {
    display: flex;
    gap: 6px;
    margin-left: 7px;
  }

  .rtab {
    height: 20px;
    padding: 0 10px;
    border-radius: 10px;
  }

  .rtab.extra-tab {
    margin-left: 3px;
  }

  .rtab.on {
    background: #4a8ff0;
    color: #fff;
    font-weight: 700;
  }

  .search {
    display: flex;
    align-items: center;
    flex: 1;
    margin-left: 15px;
    color: #7b87a3;
  }

  .search input {
    width: 100%;
  }

  .search input::placeholder {
    color: #7b87a3;
  }

  .account {
    display: flex;
    align-items: center;
    gap: 7px;
  }

  .account button {
    gap: 2px;
  }

  .account .vsep {
    margin: 0 -1px 0 2px;
  }

  .fold {
    margin-left: -2px;
  }

  /* ribbon */
  .ribbon {
    display: flex;
    height: 64px;
    background: #fff;
    border-bottom: 1px solid #e3e5e9;
    box-shadow: 0 1px 2px #e8eaee;
    z-index: 1;
  }

  .group {
    position: relative;
    display: flex;
    flex: none;
    border-right: 1px solid #ebecef;
    height: 62px;
  }

  .launcher {
    position: absolute;
    right: 5px;
    bottom: 2px;
    width: 4px;
    height: 4px;
    border: solid #7b87a3;
    border-width: 0 1px 1px 0;
  }

  .big {
    flex-direction: column;
    justify-content: flex-start;
    padding-top: 3px;
    gap: 3px;
  }

  .big span {
    display: flex;
    align-items: center;
    gap: 3px;
  }

  .small {
    height: 26px;
    gap: 1px;
  }

  .small span {
    padding-top: 1px;
  }

  .clipboard {
    width: 157px;
    padding-left: 13px;
    box-sizing: border-box;
  }

  .stack {
    display: flex;
    flex-direction: column;
    margin: 1px 10px 0 9px;
  }

  .font,
  .para {
    flex-direction: column;
    padding-top: 1px;
    box-sizing: border-box;
  }

  .font {
    width: 317px;
    padding-left: 6px;
  }

  .para {
    width: 256px;
    padding-left: 6px;
  }

  .row {
    display: flex;
    align-items: center;
    height: 26px;
  }

  .tool {
    width: 25px;
    height: 24px;
  }

  .tool.wide {
    width: 34px;
    padding-left: 2px;
    justify-content: flex-start;
  }

  .tool-sep {
    width: 1px;
    height: 18px;
    margin: 0 4px;
    background: #e3e5e9;
  }

  .pick {
    display: flex;
    align-items: center;
    box-sizing: border-box;
    padding: 0 3px 0 2px;
    border: 1px solid #dfe1e8;
    background: #fff;
  }

  .fonts {
    display: flex;
    height: 24px;
    margin-right: 3px;
  }

  .fonts .name {
    width: 116px;
  }

  .fonts .size {
    width: 79px;
    border-left: none;
  }

  .gallery-group {
    width: 288px;
    padding-left: 5px;
    box-sizing: border-box;
  }

  .gallery {
    display: flex;
    width: 277px;
    height: 50px;
    margin-top: 2px;
    box-sizing: border-box;
    border: 1px solid #e1e2e7;
    border-radius: 2px;
  }

  .card {
    flex-direction: column;
    width: 65px;
    box-sizing: border-box;
    border: 2px solid transparent;
    overflow: hidden;
    color: #2b3040;
  }

  .last-card {
    width: 68px;
  }

  .card.on {
    border-color: #dcdde5;
  }

  .sample {
    height: 28px;
    line-height: 28px;
    color: #000;
    font-size: 14px;
  }

  .arial {
    font: 700 19px/28px 'Liberation Sans', sans-serif;
  }

  .serif {
    font-family: 'Liberation Serif', serif;
  }

  .gallery-nav {
    display: grid;
    grid-auto-rows: 1fr;
    width: 15px;
    margin-left: auto;
    border-left: 1px solid #e7e8ec;
  }

  .gallery-nav button {
    flex-direction: column;
    gap: 2px;
    border-bottom: 1px solid #e7e8ec;
  }

  .gallery-nav button:last-child {
    border: none;
  }

  .bar {
    width: 6px;
    height: 1px;
    background: #727d96;
  }

  .layout {
    padding: 0 11px 0 10px;
  }

  .find {
    padding: 0 10px 0 9px;
    gap: 12px;
  }

  /* document */
  .work {
    display: flex;
    flex: 1;
  }

  .canvas {
    display: flex;
    flex: 1;
    align-items: flex-start;
    justify-content: center;
    padding: 12px 0 64px;
  }

  .page {
    position: relative;
    display: flex;
    flex-direction: column;
    flex: none;
    width: 524px;
    aspect-ratio: 524 / 741;
    box-sizing: border-box;
    padding: 48px 64px;
    background: #fff;
    box-shadow: 0 6px 14px 4px rgba(60, 66, 76, 0.18);
  }

  .marks {
    display: flex;
    justify-content: space-between;
  }

  .marks.bottom {
    margin-top: auto;
  }

  .marks i {
    width: 15px;
    height: 15px;
    border: 0 solid #bfbfbf;
  }

  .marks i:first-child {
    border-right-width: 1px;
  }

  .marks i:last-child {
    border-left-width: 1px;
  }

  .marks.top i {
    border-bottom-width: 1px;
  }

  .marks.bottom i {
    border-top-width: 1px;
  }

  .text {
    display: grid;
    grid-template-rows: repeat(19, 1fr) auto auto;
    justify-items: start;
    height: 573px;
    margin: -1px 15px 0;
    color: #262626;
    font-size: 16px;
    line-height: 27px;
  }

  .line {
    display: flex;
    align-items: flex-end;
    margin: 0;
    background: #c6c6c6;
    white-space: pre;
  }

  .dot {
    flex: 1;
    color: #666;
    font-size: 15px;
    text-align: center;
  }

  .mark {
    width: 6px;
    color: #555;
    font-size: 8px;
  }

  .last {
    align-items: flex-start;
    height: 37px;
  }

  .blank {
    height: 14px;
    line-height: 14px;
  }

  .mini,
  .context {
    position: absolute;
    box-sizing: border-box;
    border: 1px solid #c9ccd3;
    background: #fff;
    box-shadow: 0 1px 4px rgba(40, 50, 70, 0.3);
  }

  .mini {
    top: 63px;
    left: 290px;
    width: 232px;
    padding: 1px;
  }

  .mini .fonts {
    margin-right: 2px;
  }

  .mini .fonts .name {
    width: 69px;
  }

  .mini .fonts .size {
    width: 73px;
  }

  .context {
    top: 135px;
    left: 286px;
    width: 255px;
    border-color: #cfd3de;
  }

  .item {
    display: flex;
    align-items: center;
    gap: 7px;
    height: 28px;
    padding-right: 4px;
  }

  .main {
    flex: 1;
    justify-content: flex-start;
    gap: 7px;
    height: 28px;
    padding-left: 5px;
  }

  .main span,
  kbd {
    padding-top: 1px;
  }

  kbd {
    margin-left: auto;
    margin-right: 13px;
    color: #80848e;
    font: inherit;
  }

  .cell-sep {
    width: 1px;
    height: 16px;
    background: #dfe1e8;
  }

  .sub {
    margin: 0 4px 0 3px;
    border: 3px solid transparent;
    border-left: 4px solid #727d96;
    border-right: none;
  }

  .menu-sep {
    height: 1px;
    margin: 4px 0;
    background: #e0e2ea;
  }

  .pointer {
    position: absolute;
    top: 204px;
    left: 72px;
    overflow: visible;
    pointer-events: none;
    filter: drop-shadow(2px 3px 2px rgba(0, 0, 0, 0.55));
  }

  /* scrollbar */
  .scroll {
    display: flex;
    flex-direction: column;
    align-items: center;
    gap: 11px;
    width: 13px;
    padding: 3px 0 8px;
    border: solid #e4e6ed;
    border-width: 0 1px;
    background: #e9ebf1;
  }

  .split {
    margin-bottom: -3px;
    background: #f7f8fa;
  }

  .thumb {
    flex: 1;
    width: 12px;
    border-radius: 6px;
    background: #d2d6e0;
  }

  .pair {
    display: flex;
    flex-direction: column;
    gap: 1px;
  }

  .ring {
    width: 4px;
    height: 4px;
    margin: 2px 0;
    border: 1px solid #727d96;
  }

  /* styles panel */
  .panel {
    display: flex;
    flex-direction: column;
    width: 236px;
    padding: 0 12px;
    border-right: 1px solid #e0e2ea;
  }

  .panel .icon {
    color: #2b3040;
  }

  .panel-head {
    display: flex;
    align-items: center;
    height: 28px;
    margin: 0 -10px 10px -3px;
    color: #4c556d;
  }

  .panel-head button {
    gap: 3px;
  }

  .panel-head span {
    padding-top: 1px;
  }

  .pin {
    margin-left: auto;
  }

  .panel .pick {
    border-color: #d5d7df;
    border-radius: 2px;
  }

  .panel .current {
    height: 32px;
    padding: 0 8px 0 5px;
    color: #000;
    font-size: 16px;
  }

  .current .caret {
    border-width: 4px 4px 0;
  }

  .actions {
    display: flex;
    gap: 10px;
    margin-top: 7px;
  }

  .actions button {
    width: 78px;
    height: 23px;
    padding-top: 1px;
    border: 1px solid #d5d7df;
    background: #fff;
    color: #4c556d;
  }

  h2 {
    margin: 21px 0 6px;
    color: #4c556d;
    font-weight: 400;
    font-size: 14px;
    line-height: 20px;
  }

  .list {
    flex: 1;
    padding: 2px 12px 0 2px;
    border: 1px solid #dfe1e8;
    border-radius: 2px;
    background: #fff;
  }

  .style {
    justify-content: space-between;
    width: 100%;
    height: 34px;
    padding-left: 3px;
    border: 1px solid transparent;
    color: #000;
    font-size: 14px;
  }

  .style .icon {
    color: #000;
    margin-bottom: 7px;
  }

  .style.on {
    border-color: #4a8ff0;
  }

  .style u {
    margin-right: 6px;
    margin-bottom: 6px;
    font-size: 12px;
    line-height: 14px;
  }

  .h1,
  .h2,
  .h3,
  .h4 {
    font-weight: 700;
    font-size: 20px;
    font-family: 'Liberation Mono', 'Noto Sans CJK SC', monospace;
  }

  .h4 {
    font-size: 18px;
  }

  .h3 {
    font-size: 19px;
  }

  .char {
    font-size: 13px;
  }

  .web {
    font-size: 16px;
  }

  .filter {
    display: flex;
    align-items: center;
    gap: 6px;
    margin-top: 7px;
  }

  .filter .pick {
    flex: 1;
    height: 23px;
    padding-right: 6px;
  }

  .foot {
    display: flex;
    align-items: center;
    justify-content: space-between;
    margin: 10px 5px 28px 0;
  }

  .foot label {
    display: flex;
    align-items: center;
    gap: 5px;
  }

  .foot input {
    display: grid;
    place-items: center;
    width: 13px;
    height: 13px;
    appearance: none;
    border: 1px solid #2b3040;
    box-sizing: border-box;
    background: #fff;
  }

  .foot input:checked::before {
    content: '';
    width: 7px;
    height: 3px;
    margin-bottom: 3px;
    border: solid #2b3040;
    border-width: 0 0 1px 1px;
    transform: rotate(-45deg);
  }

  .foot a {
    display: flex;
    align-items: center;
    gap: 3px;
    color: #417ff9;
    text-decoration: none;
  }

  /* icon rail */
  .side {
    display: flex;
    flex-direction: column;
    align-items: center;
    gap: 4px;
    width: 42px;
    padding: 9px 1px 0 0;
  }

  .grip {
    width: 20px;
    height: 2px;
    margin-bottom: 10px;
    border: solid #c9ccd4;
    border-width: 1px 0;
  }

  .side button {
    width: 32px;
    height: 32px;
    border-radius: 2px;
  }

  .side button.on {
    background: #d7dce4;
  }

  .side-end {
    display: flex;
    justify-content: center;
    width: 38px;
    margin-top: auto;
    padding: 23px 0 14px;
    border-top: 1px solid #dfe1e8;
  }

  /* status bar */
  .status {
    display: flex;
    align-items: center;
    height: 28px;
    border-top: 1px solid #e0e1e8;
  }

  .status .vsep {
    height: 14px;
  }

  .cell {
    padding: 1px 6px 0 10px;
  }

  .cell + .vsep + .cell {
    padding-left: 9px;
  }

  .status button .caret {
    margin: 0 5px;
  }

  .proof {
    padding-left: 1px;
  }

  .last-proof {
    padding: 0 10px 0 6px;
  }

  .view {
    display: flex;
    align-items: center;
    margin-left: auto;
    padding-right: 10px;
  }

  .view .vsep {
    margin: 0 9px 0 10px;
  }

  .mode {
    width: 26px;
    height: 24px;
    border-radius: 2px;
  }

  .mode.on {
    background: #d7dce4;
  }

  .step {
    width: 27px;
    height: 24px;
  }

  .less {
    width: 10px;
    height: 2px;
    background: #2b3a52;
  }

  input[type='range'] {
    appearance: none;
    width: 143px;
    height: 13px;
    background: linear-gradient(#566075, #566075) no-repeat 0 6px / 50px 1px,
      linear-gradient(#c9ccd3, #c9ccd3) no-repeat 0 6px / 100% 1px;
  }

  input[type='range']::-webkit-slider-thumb {
    appearance: none;
    width: 13px;
    height: 13px;
    box-sizing: border-box;
    border: 1px solid #2b3040;
    border-radius: 50%;
    background: #eceae4;
  }

  .brand {
    position: absolute;
    right: 11px;
    bottom: 8px;
    display: flex;
    align-items: center;
    opacity: 0.85;
    pointer-events: none;
    z-index: 2;
  }

  .words {
    display: flex;
    flex-direction: column;
    color: #4a8ad4;
  }

  .words strong {
    font-size: 21px;
    line-height: 24px;
  }

  .words span {
    color: #4cba70;
    font: 700 16px/18px 'Liberation Sans', sans-serif;
  }
</style>
